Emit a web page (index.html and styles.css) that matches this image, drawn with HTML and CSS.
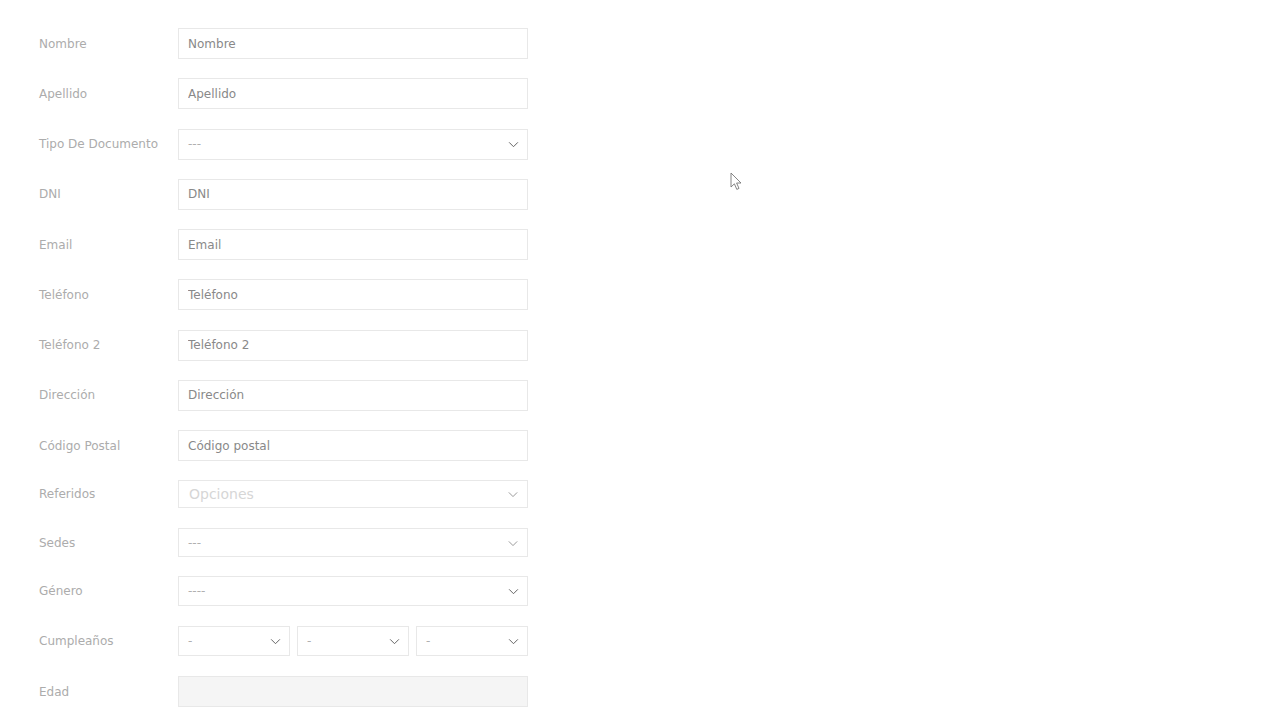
FILE: index.html
```html
<!DOCTYPE html>
<html lang="es">
<head>
    <meta charset="UTF-8">
    <meta name="viewport" content="width=device-width, initial-scale=1.0">
    <title>Cliente</title>
    <link rel="stylesheet" href="styles.css">
</head>
<body>
    <form class="client-form">
        <div class="form-row">
            <label class="form-label">Nombre</label>
            <input class="form-input" type="text" placeholder="Nombre">
        </div>
        <div class="form-row">
            <label class="form-label">Apellido</label>
            <input class="form-input" type="text" placeholder="Apellido">
        </div>
        <div class="form-row">
            <label class="form-label">Tipo De Documento</label>
            <div class="select-box">
                <select class="form-select"><option>---</option></select>
                <svg class="chevron" viewBox="0 0 12 8"><path d="M1 1.5l5 5 5-5"/></svg>
            </div>
        </div>
        <div class="form-row">
            <label class="form-label">DNI</label>
            <input class="form-input" type="text" placeholder="DNI">
        </div>
        <div class="form-row">
            <label class="form-label">Email</label>
            <input class="form-input" type="text" placeholder="Email">
        </div>
        <div class="form-row">
            <label class="form-label">Teléfono</label>
            <input class="form-input" type="text" placeholder="Teléfono">
        </div>
        <div class="form-row">
            <label class="form-label">Teléfono 2</label>
            <input class="form-input" type="text" placeholder="Teléfono 2">
        </div>
        <div class="form-row">
            <label class="form-label">Dirección</label>
            <input class="form-input" type="text" placeholder="Dirección">
        </div>
        <div class="form-row">
            <label class="form-label">Código Postal</label>
            <input class="form-input" type="text" placeholder="Código postal">
        </div>
        <div class="form-row row-small">
            <label class="form-label">Referidos</label>
            <div class="select-box multi">
                <span class="multi-placeholder">Opciones</span>
                <svg class="chevron light" viewBox="0 0 12 8"><path d="M1 1.5l5 5 5-5"/></svg>
            </div>
        </div>
        <div class="form-row row-mid">
            <label class="form-label">Sedes</label>
            <div class="select-box">
                <select class="form-select"><option>---</option></select>
                <svg class="chevron light" viewBox="0 0 12 8"><path d="M1 1.5l5 5 5-5"/></svg>
            </div>
        </div>
        <div class="form-row row-std">
            <label class="form-label">Género</label>
            <div class="select-box">
                <select class="form-select"><option>----</option></select>
                <svg class="chevron" viewBox="0 0 12 8"><path d="M1 1.5l5 5 5-5"/></svg>
            </div>
        </div>
        <div class="form-row row-std">
            <label class="form-label">Cumpleaños</label>
            <div class="date-group">
                <div class="select-box">
                    <select class="form-select"><option>-</option></select>
                    <svg class="chevron" viewBox="0 0 12 8"><path d="M1 1.5l5 5 5-5"/></svg>
                </div>
                <div class="select-box">
                    <select class="form-select"><option>-</option></select>
                    <svg class="chevron" viewBox="0 0 12 8"><path d="M1 1.5l5 5 5-5"/></svg>
                </div>
                <div class="select-box">
                    <select class="form-select"><option>-</option></select>
                    <svg class="chevron" viewBox="0 0 12 8"><path d="M1 1.5l5 5 5-5"/></svg>
                </div>
            </div>
        </div>
        <div class="form-row row-last">
            <label class="form-label">Edad</label>
            <input class="form-input disabled" type="text" disabled>
        </div>
    </form>

    <!-- mouse pointer captured in the screenshot -->
    <svg class="pointer" viewBox="0 0 13 19">
        <path d="M1 1v14l3.4-3.2 2.4 5.6 2.2-1-2.4-5.4H11z"/>
    </svg>
</body>
</html>
```

FILE: styles.css
```css
body {
    margin: 0;
    font-family: "DejaVu Sans", sans-serif;
    background: #fff;
    color: #888;
}

.client-form {
    padding: 28px 0 0 39px;
    width: 489px;
}

.form-row {
    display: flex;
    align-items: center;
    height: 31px;
    margin-bottom: 19.25px;
}

.row-small {
    height: 28px;
    margin-bottom: 20px;
}

.row-mid {
    height: 29px;
    margin-bottom: 19px;
}

.row-std {
    height: 30px;
    margin-bottom: 20px;
}

.row-last {
    margin-bottom: 0;
}

.form-label {
    width: 139px;
    flex-shrink: 0;
    font-size: 12px;
    color: #acacac;
}

.form-input,
.select-box {
    flex: 1;
    height: 100%;
    box-sizing: border-box;
    border: 1px solid #e8e8e8;
    background: #fff;
}

.form-input {
    padding: 0 9px;
    font-family: inherit;
    font-size: 12px;
    color: #888;
    outline: none;
}

.form-input::placeholder {
    color: #898989;
}

.form-input.disabled {
    background: #f5f5f5;
    border-color: #e8e8e8;
}

.select-box {
    position: relative;
    display: flex;
    align-items: center;
}

.form-select {
    appearance: none;
    -webkit-appearance: none;
    width: 100%;
    height: 100%;
    border: none;
    background: transparent;
    padding: 0 30px 0 9px;
    font-family: inherit;
    font-size: 12px;
    color: #b0b0b0;
    outline: none;
}

.chevron {
    position: absolute;
    right: 8px;
    top: 50%;
    width: 11px;
    height: 7px;
    margin-top: -3px;
    pointer-events: none;
    fill: none;
    stroke: #606060;
    stroke-width: 1.1;
}

.chevron.light {
    stroke: #909090;
    right: 9px;
    width: 10px;
}

.multi {
    padding-left: 10px;
}

.multi-placeholder {
    font-size: 14px;
    color: #d6d6d6;
}

.date-group {
    flex: 1;
    height: 100%;
    display: grid;
    grid-template-columns: repeat(3, 1fr);
    gap: 7px;
}

.pointer {
    position: absolute;
    left: 730px;
    top: 172px;
    width: 13px;
    height: 19px;
    fill: #fff;
    stroke: #777;
    stroke-width: 0.9;
}
```
